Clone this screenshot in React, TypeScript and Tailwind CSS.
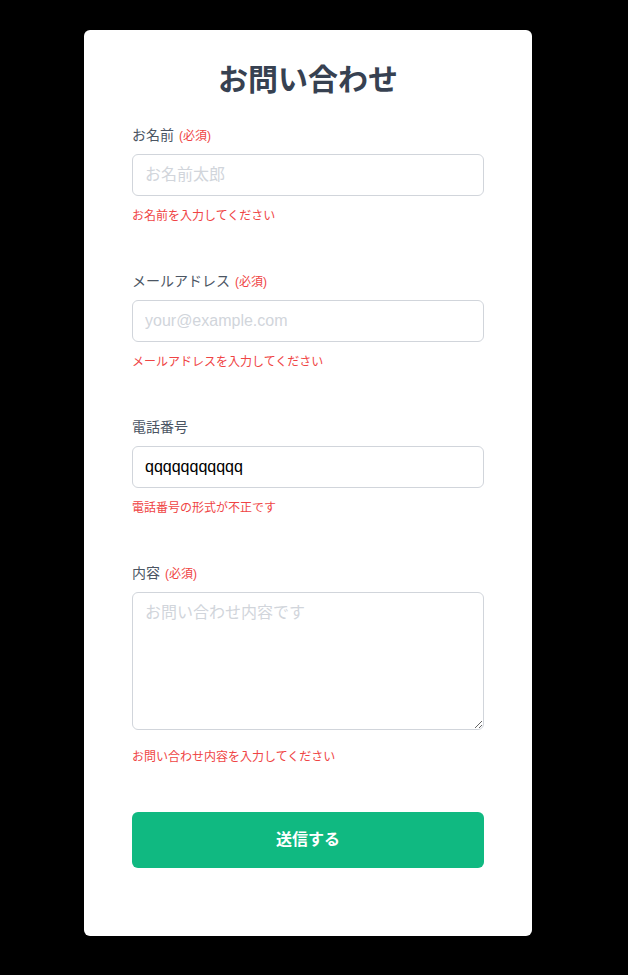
import React, { useState } from 'react';

const font = "font-['Liberation_Sans','Noto_Sans_CJK_JP',sans-serif]";

interface FieldProps {
  label: string;
  required?: boolean;
  error: string;
  errorGap?: string;
  children: React.ReactNode;
}

const Field: React.FC<FieldProps> = ({ label, required, error, errorGap = 'mt-3', children }) => (
  <div className="flex flex-col">
    <label className="block text-sm leading-5 text-[#4b5563] mb-[9px]">
      {label}
      {required && <span className="ml-[5px] text-xs text-[#ef4444]">(必須)</span>}
    </label>
    {children}
    <p className={`${errorGap} text-xs leading-4 text-[#ef4444]`}>{error}</p>
  </div>
);

const inputCls =
  'w-full h-[42px] px-3 py-2 text-base leading-6 text-black border border-[#d1d5db] rounded-md outline-none placeholder:text-[#d1d5db]';

export default function App() {
  const [name, setName] = useState('');
  const [email, setEmail] = useState('');
  const [tel, setTel] = useState('qqqqqqqqqqq');
  const [body, setBody] = useState('');

  return (
    <div className={`min-h-screen bg-black flex justify-center pr-3 pt-[30px] pb-[39px] ${font}`}>
      <div className="w-[448px] bg-white rounded-md px-12 pt-8 pb-[68px]">
        <h1 className="text-3xl leading-9 font-bold text-[#374151] text-center mb-[27px]">
          お問い合わせ
        </h1>

        <form className="flex flex-col gap-[47px]" onSubmit={(e) => e.preventDefault()}>
          <Field label="お名前" required error="お名前を入力してください">
            <input
              className={inputCls}
              placeholder="お名前太郎"
              value={name}
              onChange={(e) => setName(e.target.value)}
            />
          </Field>

          <Field label="メールアドレス" required error="メールアドレスを入力してください">
            <input
              className={inputCls}
              placeholder="your@example.com"
              value={email}
              onChange={(e) => setEmail(e.target.value)}
            />
          </Field>

          <Field label="電話番号" error="電話番号の形式が不正です">
            <input className={inputCls} value={tel} onChange={(e) => setTel(e.target.value)} />
          </Field>

          <Field label="内容" required error="お問い合わせ内容を入力してください" errorGap="mt-[19px]">
            <textarea
              rows={5}
              className="block w-full h-[138px] px-3 py-2 text-base leading-6 text-black border border-[#d1d5db] rounded-md outline-none placeholder:text-[#d1d5db]"
              placeholder="お問い合わせ内容です"
              value={body}
              onChange={(e) => setBody(e.target.value)}
            />
          </Field>

          <button
            type="submit"
            className="w-full h-14 bg-[#10b981] text-white font-bold text-base rounded-md"
          >
            送信する
          </button>
        </form>
      </div>
    </div>
  );
}
